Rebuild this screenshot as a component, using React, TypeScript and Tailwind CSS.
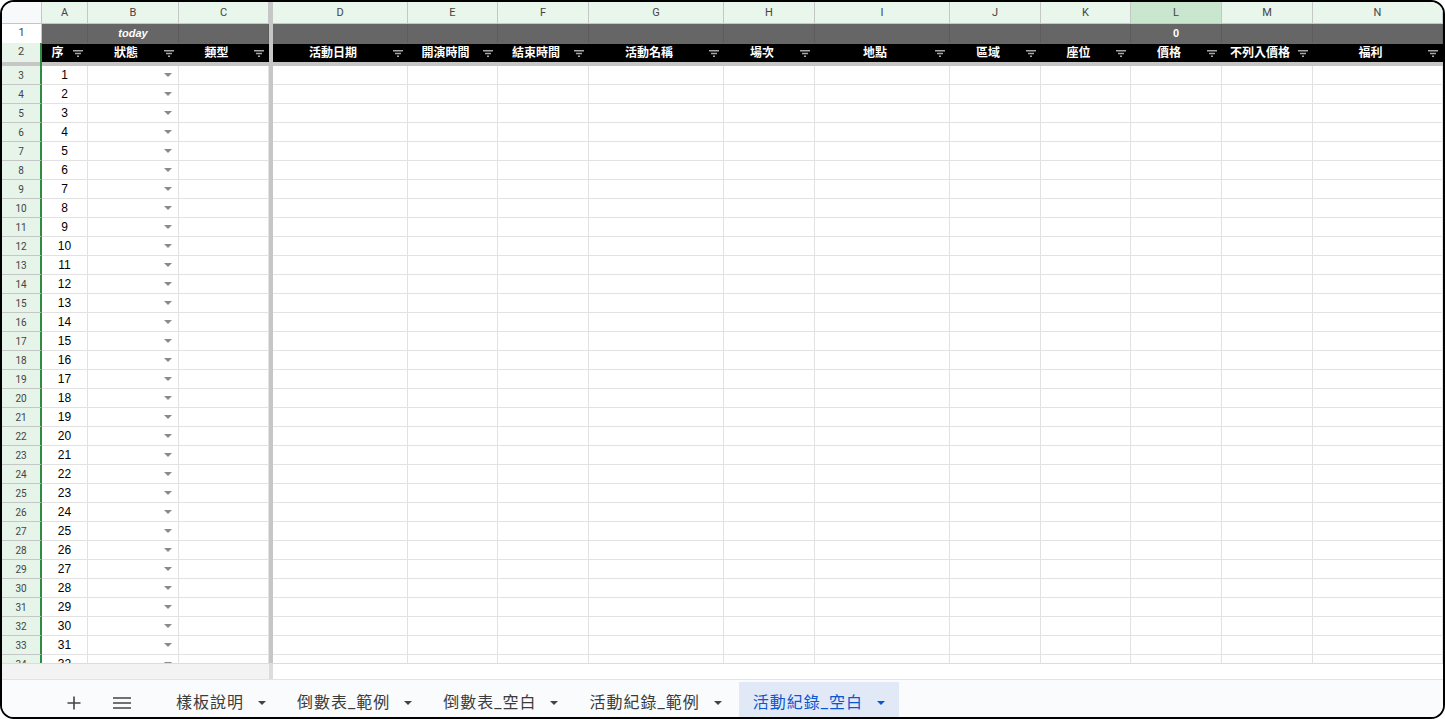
import React from "react";

const COLS =
  "grid grid-cols-[40px_46px_91px_90px_4px_135px_90px_91px_135px_91px_135px_91px_90px_91px_91px_130px]";

const FONT = "font-['Liberation_Sans','Noto_Sans_CJK_TC',sans-serif]";
const HEAD_FONT = "font-['Roboto','Liberation_Sans',sans-serif]";

const letters = ["A", "B", "C", "", "D", "E", "F", "G", "H", "I", "J", "K", "L", "M", "N"];
const titles = [
  "序",
  "狀態",
  "類型",
  "",
  "活動日期",
  "開演時間",
  "結束時間",
  "活動名稱",
  "場次",
  "地點",
  "區域",
  "座位",
  "價格",
  "不列入價格",
  "福利",
];
const rows = Array.from({ length: 32 }, (_, i) => i + 3);
const tabs = ["樣板說明", "倒數表_範例", "倒數表_空白", "活動紀錄_範例"];

const FilterIcon = () => (
  <svg width="10" height="7" viewBox="0 0 10 7" className="shrink-0">
    <path d="M0 0.75h10M2 3.5h6M4 6.25h2" stroke="#a8a8a8" strokeWidth="1.3" />
  </svg>
);

const Caret = ({ color = "#777" }: { color?: string }) => (
  <svg width="8" height="4" viewBox="0 0 8 4">
    <path d="M0 0h8L4 4z" fill={color} />
  </svg>
);

const Freeze = () => <div className="bg-[#c6c6c6]" />;

const ColumnHeader = () => (
  <div className={`${COLS} h-[22px] ${HEAD_FONT} text-[11px] text-[#444]`}>
    <div className="border-r border-b border-[#c4c7c5] bg-[#f8f9fa]" />
    {letters.map((l, i) =>
      i === 3 ? (
        <Freeze key={i} />
      ) : (
        <div
          key={i}
          className={`flex items-center justify-center border-r border-b border-[#c4c7c5] pt-[1px] ${
            l === "L" ? "bg-[#c9e7cf]" : "bg-[#e9f6ec]"
          }`}
        >
          {l}
        </div>
      )
    )}
  </div>
);

const TodayRow = () => (
  <div className={`${COLS} h-[19px]`}>
    <div className={`flex items-center justify-center border-r border-[#c4c7c5] bg-white ${HEAD_FONT} text-[11px] text-[#444]`}>
      1
    </div>
    {letters.map((l, i) =>
      i === 3 ? (
        <Freeze key={i} />
      ) : (
        <div
          key={i}
          className={`flex items-center justify-center border-r border-[#5c5c5c] bg-[#666666] ${FONT} text-[11px] font-bold text-white`}
        >
          {l === "B" ? <i>today</i> : l === "L" ? "0" : ""}
        </div>
      )
    )}
  </div>
);

const TitleRow = () => (
  <div className={`${COLS} h-[19px]`}>
    <div
      className={`flex items-center justify-center border-r-2 border-r-[#2e8b46] bg-[#e6f4ea] ${HEAD_FONT} text-[11px] text-[#444]`}
    >
      2
    </div>
    {titles.map((t, i) =>
      i === 3 ? (
        <Freeze key={i} />
      ) : (
        <div
          key={i}
          className={`flex items-center border-t border-t-[#2e8b46] bg-black pr-[5px] ${FONT} text-[12px] font-bold text-white`}
        >
          <span className="flex-1 text-center leading-none">{t}</span>
          <FilterIcon />
        </div>
      )
    )}
  </div>
);

const DataRow = ({ n }: { n: number }) => (
  <div className={`${COLS} h-[19px]`}>
    <div
      className={`flex items-center justify-center border-b border-[#c4c7c5] border-r-2 border-r-[#2e8b46] bg-[#e6f4ea] ${HEAD_FONT} text-[10px] text-[#444]`}
    >
      {n}
    </div>
    <div className={`flex items-center justify-center border-r border-b border-[#e2e2e2] bg-white ${FONT} text-[12px] text-black`}>
      {n - 2}
    </div>
    <div className="flex items-center justify-end border-r border-b border-[#e2e2e2] bg-white pr-[6px]">
      <Caret color="#8a8a8a" />
    </div>
    <div className="border-r border-b border-[#e2e2e2] bg-white" />
    <Freeze />
    {Array.from({ length: 11 }, (_, i) => (
      <div key={i} className="border-r border-b border-[#e2e2e2] bg-white" />
    ))}
  </div>
);

export default function App() {
  return (
    <div className="h-[719px] w-[1445px] bg-white">
      <div className="flex h-full w-full flex-col overflow-hidden rounded-[14px] border-2 border-black bg-white">
        <div className="h-[661px] overflow-hidden">
          <ColumnHeader />
          <TodayRow />
          <TitleRow />
          <div className={`${COLS} h-[4px]`}>
            <div className="border-r-2 border-r-[#2e8b46] bg-[#c6c6c6]" />
            <div className="col-span-15 bg-[#c6c6c6]" />
          </div>
          {rows.map((n) => (
            <DataRow key={n} n={n} />
          ))}
        </div>

        <div className="flex h-[16px] border-t border-[#dadce0]">
          <div className="w-[267px] bg-[#f3f3f3]" />
          <div className="w-[4px] bg-[#dcdcdc]" />
          <div className="flex-1 bg-white" />
        </div>

        <div
          className={`flex flex-1 items-stretch border-t border-[#e3e3e3] bg-[#f9fbfd] font-['Roboto','Noto_Sans_CJK_TC',sans-serif] text-[16px] text-[#3c3c3c]`}
        >
          <div className="ml-[48px] flex w-[48px] items-center justify-center pt-[8px]">
            <svg width="14" height="14" viewBox="0 0 14 14">
              <path d="M7 0.5v13M0.5 7h13" stroke="#444" strokeWidth="1.6" />
            </svg>
          </div>
          <div className="flex w-[48px] items-center justify-center pt-[8px]">
            <svg width="18" height="12" viewBox="0 0 18 12">
              <path d="M0 1h18M0 6h18M0 11h18" stroke="#444" strokeWidth="1.6" />
            </svg>
          </div>
          <div className="ml-[16px] flex items-stretch gap-[3px] pt-[2px]">
            {tabs.map((t) => (
              <div key={t} className="flex items-center gap-[14px] px-[14px] pt-[6px] tracking-[1px]">
                <span>{t}</span>
                <Caret color="#444" />
              </div>
            ))}
            <div className="flex items-center gap-[14px] bg-[#e1e9f7] px-[14px] pt-[6px] tracking-[1px] text-[#0b57d0]">
              <span>活動紀錄_空白</span>
              <Caret color="#0b57d0" />
            </div>
          </div>
        </div>
      </div>
    </div>
  );
}
